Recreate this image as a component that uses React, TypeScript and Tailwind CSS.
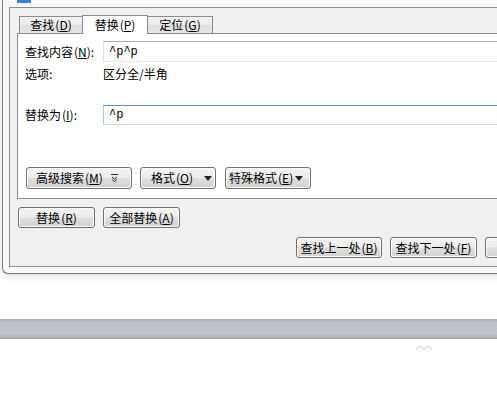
import type { ReactNode } from "react";

const font = "font-['SimSun','Noto_Sans_CJK_SC',sans-serif]";

const Key = ({ k }: { k: string }) => (
  <span className="ml-[1px]">
    (<span className="underline underline-offset-1">{k}</span>)
  </span>
);

const Caret = () => (
  <svg width="8" height="5" viewBox="0 0 8 5" className="shrink-0">
    <path d="M0 0h8L4 5z" fill="#222" />
  </svg>
);

const MoreIcon = () => (
  <svg width="7" height="8" viewBox="0 0 7 8" className="shrink-0">
    <path d="M0 0.5h7M1 3l2.5 2 2.5-2M1 5.5l2.5 2 2.5-2" stroke="#333" fill="none" strokeWidth="1" />
  </svg>
);

const Btn = ({
  children,
  className = "",
}: {
  children?: ReactNode;
  className?: string;
}) => (
  <div
    className={`flex items-center shrink-0 rounded-[3px] border border-[#707070] bg-[linear-gradient(#f3f3f3,#ececec_48%,#dedede_52%,#d2d2d2)] shadow-[inset_0_0_0_1px_#fbfbfb] text-[12px] leading-none text-black ${className}`}
  >
    {children}
  </div>
);

const tabs = [
  { label: "查找", k: "D", active: false, w: "w-[64px]" },
  { label: "替换", k: "P", active: true, w: "w-[66px]" },
  { label: "定位", k: "G", active: false, w: "w-[66px]" },
];

export default function App() {
  return (
    <div className={`w-[497px] h-[399px] overflow-hidden bg-white flex flex-col ${font}`}>
      {/* window frame */}
      <div className="ml-[2px] w-[600px] h-[274px] shrink-0 flex flex-col bg-[#f9f9f9] border-l border-b border-[#7a7a7a] rounded-bl-[6px] pl-[6px] shadow-[0_3px_6px_rgba(0,0,0,0.12)]">
        <div className="h-[7px] shrink-0">
          <div className="ml-[8px] w-[14px] h-[3px] bg-[#3f7fd8]" />
        </div>

        {/* dialog body */}
        <div className="h-[260px] shrink-0 flex flex-col bg-[#f0f0f0] border-t border-l border-b border-[#8e8e8e]">
          {/* tabs */}
          <div className="flex items-end h-[25px] pl-[9px] shrink-0">
            {tabs.map((t) =>
              t.active ? (
                <div
                  key={t.label}
                  className={`${t.w} -ml-[1px] -mb-[1px] h-[19px] relative z-10 flex items-center justify-center bg-white border border-b-0 border-[#898c95] text-[12px] leading-none`}
                >
                  {t.label}
                  <Key k={t.k} />
                </div>
              ) : (
                <div
                  key={t.label}
                  className={`${t.w} -ml-[1px] first:ml-0 h-[17px] flex items-center justify-center bg-[linear-gradient(#f2f2f2,#ebebeb_50%,#dddddd_50%,#e5e5e5)] border border-b-0 border-[#898c95] text-[12px] leading-none`}
                >
                  {t.label}
                  <Key k={t.k} />
                </div>
              )
            )}
          </div>

          {/* tab panel */}
          <div className="ml-[7px] h-[166px] shrink-0 flex flex-col bg-white border border-[#898c95] text-[12px] leading-none text-black">
            <div className="mt-[7px] flex items-center h-[21px]">
              <div className="w-[85px] pl-[7px]">
                查找内容<Key k="N" />:
              </div>
              <div className="flex-1 h-full flex items-center pl-[5px] border border-[#e2e3ea] border-t-[#abadb3] border-b-[#e3e9ef] font-['Liberation_Mono',monospace]">
                ^p^p
              </div>
            </div>
            <div className="mt-[2px] flex items-center h-[20px]">
              <div className="w-[85px] pl-[7px]">选项:</div>
              <div>区分全/半角</div>
            </div>
            <div className="mt-[21px] flex items-center h-[20px]">
              <div className="w-[85px] pl-[7px]">
                替换为<Key k="I" />:
              </div>
              <div className="flex-1 h-full flex items-center pl-[5px] border border-[#a9cce6] border-t-[#5b8fc0] border-b-[#c3dff0] font-['Liberation_Mono',monospace]">
                ^p
              </div>
            </div>
            <div className="mt-[42px] pl-[8px] flex items-center gap-[8px]">
              <Btn className="w-[106px] h-[22px] pl-[9px] gap-[8px]">
                <span>
                  高级搜索<Key k="M" />
                </span>
                <MoreIcon />
              </Btn>
              <Btn className="w-[76px] h-[22px] pl-[10px] gap-[11px]">
                <span>
                  格式<Key k="O" />
                </span>
                <Caret />
              </Btn>
              <Btn className="ml-[1px] w-[86px] h-[22px] pl-[3px] gap-[2px]">
                <span>
                  特殊格式<Key k="E" />
                </span>
                <Caret />
              </Btn>
            </div>
          </div>

          <div className="mt-[8px] ml-[8px] flex gap-[8px]">
            <Btn className="w-[77px] h-[21px] justify-center">
              替换<Key k="R" />
            </Btn>
            <Btn className="w-[77px] h-[21px] justify-center">
              全部替换<Key k="A" />
            </Btn>
          </div>

          <div className="mt-[9px] ml-[286px] flex gap-[8px]">
            <Btn className="w-[86px] h-[21px] justify-center">
              查找上一处<Key k="B" />
            </Btn>
            <Btn className="w-[87px] h-[21px] justify-center">
              查找下一处<Key k="F" />
            </Btn>
            <Btn className="w-[80px] h-[21px]" />
          </div>
        </div>
      </div>

      {/* background behind dialog */}
      <div className="mt-[45px] h-[20px] shrink-0 bg-[linear-gradient(#a9abb5,#bfc1c9_20%,#c1c3cb_75%,#a7a9b1)]" />
      <div className="ml-[416px] mt-[6px]">
        <svg width="16" height="5" viewBox="0 0 16 5">
          <path d="M0.5 5a3.5 3.5 0 0 1 7 0M8.5 5a3.5 3.5 0 0 1 7 0" stroke="#d8d8d8" fill="none" />
        </svg>
      </div>
    </div>
  );
}
